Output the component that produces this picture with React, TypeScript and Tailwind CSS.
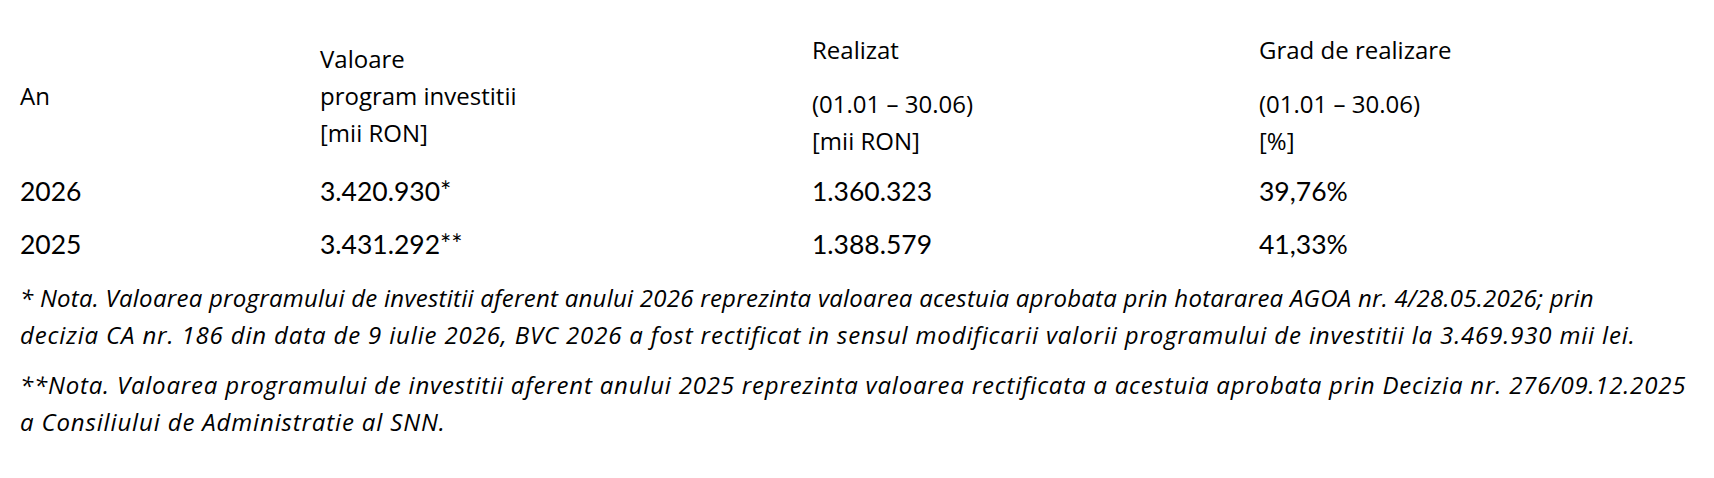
import React from "react";

function Cell({ children }: { children: React.ReactNode }) {
  return <div className="pt-[6px] pb-[10px] font-['Lato','Open_Sans',sans-serif] text-[26.5px]">{children}</div>;
}

export default function App() {
  return (
    <div className="bg-white text-black w-[1714px] h-[478px] px-[20px] pt-[23px] font-['Open_Sans','Noto_Sans',sans-serif]">
      <div className="grid grid-cols-[300px_492px_447px_1fr] text-[24px] leading-[37px]">
        {/* header row */}
        <div className="flex items-center py-[8px]">An</div>
        <div className="flex items-center py-[8px]">
          <div className="leading-[37px]">
            Valoare
            <br />
            program investitii
            <br />
            [mii RON]
          </div>
        </div>
        <div className="flex flex-col justify-center gap-[17px] py-[8px]">
          <p>Realizat</p>
          <p>
            (01.01 – 30.06)
            <br />
            [mii RON]
          </p>
        </div>
        <div className="flex flex-col justify-center gap-[17px] py-[8px]">
          <p>Grad de realizare</p>
          <p>
            (01.01 – 30.06)
            <br />
            [%]
          </p>
        </div>

        {/* data rows */}
        <Cell>2026</Cell>
        <Cell>3.420.930*</Cell>
        <Cell>1.360.323</Cell>
        <Cell>39,76%</Cell>

        <Cell>2025</Cell>
        <Cell>3.431.292**</Cell>
        <Cell>1.388.579</Cell>
        <Cell>41,33%</Cell>
      </div>

      <div className="mt-[6px] flex flex-col gap-[13px] text-[24px] leading-[37px] italic whitespace-nowrap tracking-[0.85px]">
        <p>
          <span className="tracking-[0.25px]">
            * Nota. Valoarea programului de investitii aferent anului 2026 reprezinta valoarea acestuia aprobata prin hotararea AGOA nr. 4/28.05.2026; prin
          </span>
          <br />
          decizia CA nr. 186 din data de 9 iulie 2026, BVC 2026 a fost rectificat in sensul modificarii valorii programului de investitii la 3.469.930 mii lei.
        </p>
        <p>
          <span className="tracking-[0.8px]">
            **Nota. Valoarea programului de investitii aferent anului 2025 reprezinta valoarea rectificata a acestuia aprobata prin Decizia nr. 276/09.12.2025
          </span>
          <br />
          a Consiliului de Administratie al SNN.
        </p>
      </div>
    </div>
  );
}
